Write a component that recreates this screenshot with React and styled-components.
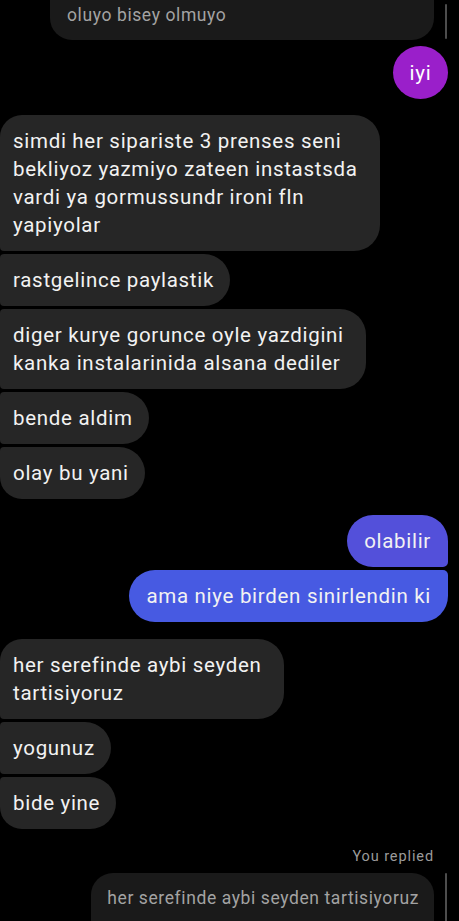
import React from "react";
import styled, { createGlobalStyle } from "styled-components";

const GlobalStyle = createGlobalStyle`
  html, body {
    margin: 0;
    padding: 0;
    background: #000;
  }
  body {
    font-family: Roboto, "Noto Sans", Arial, sans-serif;
    -webkit-font-smoothing: antialiased;
  }
`;

const Screen = styled.div`
  width: 459px;
  height: 921px;
  overflow: hidden;
  background: #000;
  display: flex;
  flex-direction: column;
`;

const QuoteRow = styled.div`
  display: flex;
  justify-content: flex-end;
  align-items: stretch;
  gap: 11px;
  padding-right: 12px;
  margin-top: ${(p) => p.$mt || 0}px;
`;

const QuoteBubble = styled.div`
  box-sizing: border-box;
  background: #1a1a1a;
  color: #a3a3a3;
  font-size: 17.5px;
  letter-spacing: 0.6px;
  line-height: 24px;
  white-space: nowrap;
  width: ${(p) => (p.$width ? `${p.$width}px` : "auto")};
  height: ${(p) => p.$height}px;
  padding: ${(p) => p.$pad};
  border-radius: ${(p) => p.$radius};
`;

const QuoteBar = styled.div`
  width: 2px;
  background: #4d4d4d;
  border-radius: 1px;
  margin: ${(p) => p.$margin || 0};
`;

const Group = styled.div`
  display: flex;
  flex-direction: column;
  gap: 3px;
  align-items: ${(p) => (p.$sent ? "flex-end" : "flex-start")};
  padding: ${(p) => (p.$sent ? "0 11px 0 0" : "0")};
  margin-top: ${(p) => p.$mt || 0}px;
`;

const Bubble = styled.div`
  box-sizing: border-box;
  font-size: 20.5px;
  letter-spacing: 0.7px;
  line-height: 28px;
  color: #f2f2f2;
  white-space: nowrap;
  padding: 12px ${(p) => (p.$sent ? 17 : p.$wide ? 22 : 16)}px 12px
    ${(p) => (p.$sent ? 17 : 13)}px;
  background: ${(p) => p.$bg || "#262626"};
  border-radius: ${(p) => p.$radius};
`;

const Dot = styled.div`
  width: 55px;
  height: 53px;
  border-radius: 50%;
  background: #9a1fca;
  color: #fff;
  font-size: 20.5px;
  letter-spacing: 0.7px;
  display: flex;
  align-items: center;
  justify-content: center;
`;

const Meta = styled.div`
  align-self: flex-end;
  padding-right: 25px;
  margin-top: 19px;
  color: #9b9b9b;
  font-size: 14.5px;
  letter-spacing: 0.9px;
  line-height: 18px;
`;

const ReplyBubble = styled.div`
  height: 40px;
  width: 432px;
  margin-top: -10px;
  background: #272727;
  border-radius: 4px 22px 22px 4px;
  position: relative;
`;

const R = (a, b, c, d) => `${a}px ${b}px ${c}px ${d}px`;

const received = [
  {
    lines: [
      "simdi her sipariste 3 prenses seni",
      "bekliyoz yazmiyo zateen instastsda",
      "vardi ya gormussundr ironi fln",
      "yapiyolar",
    ],
    r: R(22, 26, 26, 4),
  },
  { lines: ["rastgelince paylastik"], r: R(4, 26, 26, 4) },
  {
    lines: ["diger kurye gorunce oyle yazdigini", "kanka instalarinida alsana dediler"],
    r: R(4, 26, 26, 4),
  },
  { lines: ["bende aldim"], r: R(4, 26, 26, 4) },
  { lines: ["olay bu yani"], r: R(4, 26, 26, 22) },
];

const received2 = [
  { lines: ["her serefinde aybi seyden", "tartisiyoruz"], r: R(22, 26, 26, 4) },
  { lines: ["yogunuz"], r: R(4, 26, 26, 4) },
  { lines: ["bide yine"], r: R(4, 26, 26, 22) },
];

function Lines({ lines }) {
  return lines.map((l, i) => (
    <React.Fragment key={i}>
      {i > 0 && <br />}
      {l}
    </React.Fragment>
  ));
}

export default function App() {
  return (
    <>
      <GlobalStyle />
      <Screen>
        <QuoteRow>
          <QuoteBubble
            $width={384}
            $height={40}
            $pad="3px 16px 0 17px"
            $radius="0 0 22px 22px"
          >
            oluyo bisey olmuyo
          </QuoteBubble>
          <QuoteBar $margin="4px 0 1px 0" />
        </QuoteRow>

        <Group $sent $mt={6}>
          <Dot>iyi</Dot>
        </Group>

        <Group $mt={16}>
          {received.map((m, i) => (
            <Bubble key={i} $radius={m.r} $wide={m.lines.length > 1}>
              <Lines lines={m.lines} />
            </Bubble>
          ))}
        </Group>

        <Group $sent $mt={16}>
          <Bubble $sent $bg="#5350da" $radius={R(26, 26, 5, 26)}>
            olabilir
          </Bubble>
          <Bubble $sent $bg="#475ae2" $radius={R(26, 5, 26, 26)}>
            ama niye birden sinirlendin ki
          </Bubble>
        </Group>

        <Group $mt={17}>
          {received2.map((m, i) => (
            <Bubble key={i} $radius={m.r} $wide={m.lines.length > 1}>
              <Lines lines={m.lines} />
            </Bubble>
          ))}
        </Group>

        <Meta>You replied</Meta>

        <QuoteRow $mt={7}>
          <QuoteBubble $height={60} $pad="13px 15px 0 16px" $radius="22px 22px 0 0">
            her serefinde aybi seyden tartisiyoruz
          </QuoteBubble>
          <QuoteBar />
        </QuoteRow>
        <ReplyBubble />
      </Screen>
    </>
  );
}
